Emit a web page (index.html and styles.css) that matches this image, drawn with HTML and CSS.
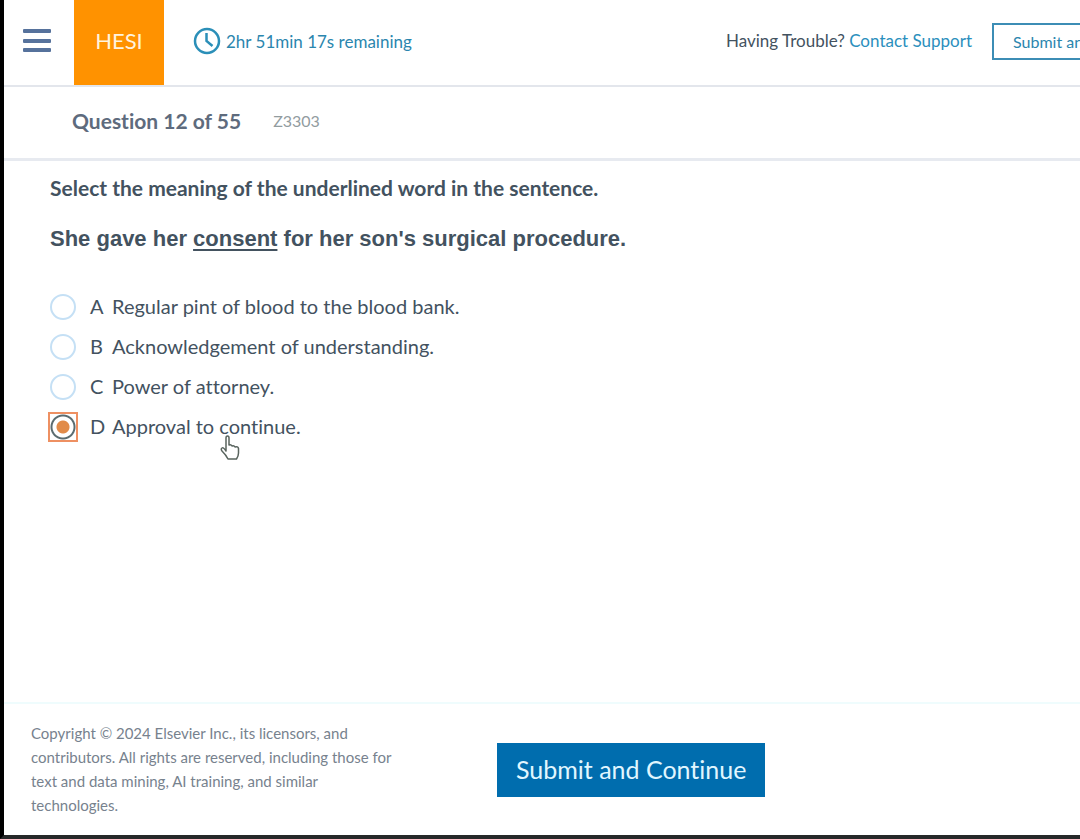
FILE: index.html
```html
<!DOCTYPE html>
<html lang="en">
<head>
<meta charset="utf-8">
<meta name="viewport" content="width=device-width, initial-scale=1">
<title>HESI Exam</title>
<link rel="stylesheet" href="styles.css">
</head>
<body>
<div class="page">
  <header class="topbar">
    <button class="menu" type="button" aria-label="Menu">
      <svg width="28" height="26" viewBox="0 0 28 26" fill="#56729c"><rect x="0" y="1" width="28" height="4" rx="1"/><rect x="0" y="11" width="28" height="4" rx="1"/><rect x="0" y="20" width="28" height="4" rx="1"/></svg>
    </button>
    <div class="brand">HESI</div>
    <div class="timer">
      <svg width="28" height="28" viewBox="0 0 28 28" fill="none" stroke="#2b8fb8"><circle cx="14" cy="14" r="12" stroke-width="2.500"/><path d="M13.500 6v8l6 5" stroke-width="2.500"/></svg>
      <span>2hr 51min 17s remaining</span>
    </div>
    <p class="help">Having Trouble? <a class="link" href="#">Contact Support</a></p>
    <button class="outline" type="button">Submit an</button>
  </header>
  <section class="progress">
    <h1 class="count">Question 12 of 55</h1>
    <span class="code">Z3303</span>
  </section>
  <main class="question">
    <h2 class="prompt">Select the meaning of the underlined word in the sentence.</h2>
    <p class="sentence">She gave her <u>consent</u> for her son's surgical procedure.</p>
    <div class="options" role="radiogroup" aria-label="Answers">
      <label class="option"><input class="radio" type="radio" name="answer"><span class="letter">A</span><span>Regular pint of blood to the blood bank.</span></label>
      <label class="option"><input class="radio" type="radio" name="answer"><span class="letter">B</span><span>Acknowledgement of understanding.</span></label>
      <label class="option"><input class="radio" type="radio" name="answer"><span class="letter">C</span><span>Power of attorney.</span></label>
      <label class="option"><input class="radio" type="radio" name="answer" checked><span class="letter">D</span><span>Approval to continue.</span>
        <svg class="pointer" width="20" height="26" viewBox="0 0 20 26" fill="#fff" stroke="#59645e" stroke-width="1.500" stroke-linejoin="round"><path d="M6 16V3q0-2 1.500-2T9 3v7q2-1 3 1 2-1 3 1 3-1 3.500 1.500V18q0 3-2 6H8Q6 20 2 16q-1.500-2 0-3t4 3z"/></svg>
      </label>
    </div>
  </main>
  <footer class="footer">
    <p class="legal">Copyright © 2024 Elsevier Inc., its licensors, and contributors. All rights are reserved, including those for text and data mining, AI training, and similar technologies.</p>
    <button class="primary" type="button">Submit and Continue</button>
  </footer>
</div>
</body>
</html>
```
FILE: styles.css
```css
* { box-sizing: border-box; }
body {
  margin: 0;
  background: #fff;
  color: #43525f;
  font-family: Lato, "Open Sans", sans-serif;
  font-variant-ligatures: none;
}
h1, h2, p { margin: 0; }
button {
  font-family: inherit;
  font-variant-ligatures: inherit;
  cursor: pointer;
}
.page {
  display: flex;
  flex-direction: column;
  min-height: 100vh;
  border-left: 4px solid #000;
  border-bottom: 4px solid #262829;
}
.topbar {
  display: flex;
  align-items: center;
  height: 87px;
  border-bottom: 2px solid #e3e6ec;
  font-size: 17px;
  overflow: hidden;
  white-space: nowrap;
}
.menu {
  display: flex;
  padding: 0;
  margin: 0 23px 3px 19px;
  border: 0;
  background: none;
}
.brand {
  display: grid;
  place-items: center;
  align-self: stretch;
  width: 90px;
  padding-bottom: 4px;
  background: #ff9200;
  color: #fff3df;
  font-size: 22px;
}
.timer {
  display: flex;
  align-items: center;
  gap: 5px;
  margin: 0 auto 3px 29px;
  color: #2b86ae;
}
.help { padding-bottom: 4px; }
.link { color: #2b8fbd; text-decoration: none; }
.outline {
  width: 88px;
  height: 37px;
  margin: 0 0 3px 20px;
  padding: 0 0 0 19px;
  border: 2px solid #3c8db5;
  border-right: 0;
  background: #fff;
  color: #2b86ae;
  font-size: 16px;
  text-align: left;
  overflow: hidden;
}
.progress {
  display: flex;
  align-items: center;
  gap: 32px;
  height: 74px;
  padding: 0 68px 4px;
  border-bottom: 3px solid #e7eaf0;
}
.count { color: #5e6b7d; font-size: 21px; font-weight: 700; }
.code { color: #929c9f; font-size: 16px; }
.question { flex: 1; padding: 13px 46px; }
.prompt { font-size: 21px; font-weight: 700; line-height: 28px; }
.sentence {
  margin-top: 23px;
  font-family: "Liberation Sans", Arial, sans-serif;
  font-size: 22px;
  font-weight: 700;
  line-height: 28px;
}
.sentence u { text-decoration-thickness: 2px; text-underline-offset: 3px; }
.options { display: grid; justify-items: start; margin-top: 34px; }
.option {
  position: relative;
  display: flex;
  align-items: center;
  height: 40px;
  font-size: 20px;
  line-height: 24px;
}
.option span { padding-bottom: 2px; }
.radio {
  appearance: none;
  width: 26px;
  height: 26px;
  margin: 0;
  border: 2px solid #c5e0f5;
  border-radius: 50%;
  background: #fff;
}
.radio:checked {
  border: 0;
  border-radius: 0;
  background: radial-gradient(circle, #e18b49 6px, #fff 7px, #fff 10px, #5b6c70 11px, #5b6c70 12px, #fff 13px);
  outline: 2px solid #ee9062;
}
.letter { width: 22px; margin-left: 14px; }
.pointer { position: absolute; left: 170px; top: 28px; }
.footer {
  display: flex;
  align-items: flex-start;
  gap: 96px;
  padding: 17px 27px 18px;
  border-top: 2px solid #effcfd;
}
.legal { width: 370px; color: #77828e; font-size: 15px; line-height: 24px; }
.primary {
  height: 54px;
  margin-top: 22px;
  padding: 0 19px 2px;
  border: 0;
  background: #006dae;
  color: #e0f6ff;
  font-size: 25px;
  white-space: nowrap;
}
```
